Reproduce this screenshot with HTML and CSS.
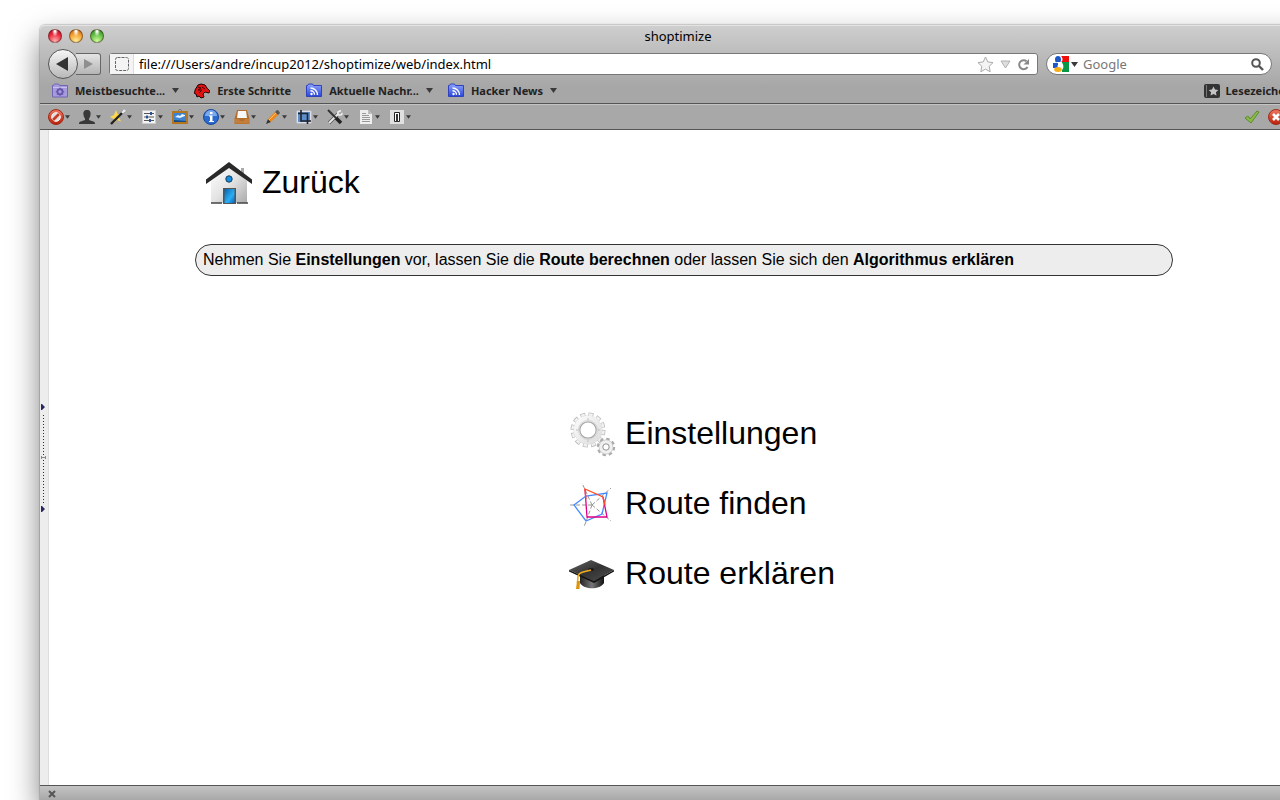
FILE: index.html
```html
<!DOCTYPE html>
<html lang="de">
<head>
<meta charset="utf-8">
<title>shoptimize</title>
<link rel="stylesheet" href="styles.css">
</head>
<body>
<svg class="defs" aria-hidden="true">
  <defs>
    <linearGradient id="gFeed" x1="0" y1="0" x2="0" y2="1"><stop offset="0" stop-color="#8fa4ff"/><stop offset="1" stop-color="#2945d8"/></linearGradient>
    <linearGradient id="gRed" x1="0" y1="0" x2="0" y2="1"><stop offset="0" stop-color="#ee7a62"/><stop offset="1" stop-color="#b81f08"/></linearGradient>
    <linearGradient id="gWall" x1="0" y1="0" x2="1" y2="1"><stop offset="0" stop-color="#fff"/><stop offset=".5" stop-color="#e4e4e4"/><stop offset="1" stop-color="#aaa"/></linearGradient>
    <linearGradient id="gDoor" x1="0" y1="0" x2="1" y2="1"><stop offset="0" stop-color="#0b5fa8"/><stop offset=".6" stop-color="#2ab0f5"/><stop offset="1" stop-color="#0a63b8"/></linearGradient>
    <linearGradient id="gGear" x1="0" y1="0" x2="1" y2="1"><stop offset="0" stop-color="#fafafa"/><stop offset="1" stop-color="#dedede"/></linearGradient>
    <linearGradient id="gCap" x1="0" y1="0" x2="1" y2="1"><stop offset="0" stop-color="#666"/><stop offset=".5" stop-color="#333"/><stop offset="1" stop-color="#505050"/></linearGradient>
    <linearGradient id="gBand" x1="0" y1="0" x2="1" y2="0"><stop offset="0" stop-color="#222"/><stop offset=".5" stop-color="#777"/><stop offset="1" stop-color="#111"/></linearGradient>
    <symbol id="caret" viewBox="0 0 7 5"><path d="M0 0h7L3.500 5z" fill="#3a3a3a"/></symbol>
    <symbol id="feed" viewBox="0 0 16 16">
      <path d="M.5 2.500h1l1-1.500h4l1 1.500h8v11H.5z" fill="url(#gFeed)" stroke="#2f42bb"/>
      <circle cx="5.500" cy="11" r="1.200" fill="#fff"/><path d="M4.500 7.800a4 4 0 0 1 4 4M4.500 5a7 7 0 0 1 7 7" fill="none" stroke="#fff" stroke-width="1.400"/>
    </symbol>
  </defs>
</svg>

<div class="window">
  <header class="chrome">
    <div class="titlebar">
      <div class="lights">
        <button class="light red" type="button" aria-label="Schließen"></button>
        <button class="light amber" type="button" aria-label="Minimieren"></button>
        <button class="light green" type="button" aria-label="Vergrößern"></button>
      </div>
      <span class="title">shoptimize</span>
    </div>

    <div class="navbar">
      <div class="history">
        <button class="back" type="button" aria-label="Zurück"><svg width="12" height="14" viewBox="0 0 12 14"><path d="M0 7 12 0v14z" fill="#333"/></svg></button>
        <button class="forward" type="button" aria-label="Vor"><svg width="9" height="10" viewBox="0 0 9 10"><path d="M9 5 0 0v10z" fill="#8f8f8f"/></svg></button>
      </div>
      <div class="urlbar">
        <span class="site"><svg width="16" height="16" viewBox="0 0 16 16"><rect x="1.500" y="1.500" width="13" height="13" rx="2" fill="none" stroke="#666" stroke-dasharray="3 1"/></svg></span>
        <input class="url" type="text" aria-label="Adresse" value="file:///Users/andre/incup2012/shoptimize/web/index.html">
        <button class="plain" type="button" aria-label="Lesezeichen setzen"><svg width="17" height="17" viewBox="0 0 17 17"><path d="m8.500 1 2.300 4.900 5.200.7-3.800 3.700 1 5.500-4.700-2.700-4.700 2.700 1-5.500L1 6.600l5.200-.7z" fill="#f4f4f4" stroke="#aaa"/></svg></button>
        <button class="plain" type="button" aria-label="Verlauf"><svg width="11" height="9" viewBox="0 0 11 9"><path d="M1 1h9L5.500 8z" fill="#ddd" stroke="#b0b0b0"/></svg></button>
        <button class="plain" type="button" aria-label="Neu laden"><svg width="13" height="13" viewBox="0 0 13 13"><path d="M9.500 3.200A4.500 4.500 0 1 0 10.500 9" fill="none" stroke="#888" stroke-width="2"/><path d="M12 1v5.500H6.500z" fill="#888"/></svg></button>
      </div>
      <div class="search">
        <button class="engine" type="button" aria-label="Suchmaschine">
          <svg width="16" height="16" viewBox="0 0 16 16"><path d="M8 0h8v6H8z" fill="#f20d0d"/><path d="M9 6h7v10H9z" fill="#089647"/><path d="M0 7h5v5H0z" fill="#1a57c8"/><ellipse cx="5" cy="3.500" rx="3" ry="3.500" fill="#1a57c8"/><path d="M8 0c2 2 2 5 0 6 3 2 3 6 1 8l-5-4 3-2-5-2 6 0z" fill="#fff"/><ellipse cx="5" cy="13.500" rx="3.800" ry="2.500" fill="#f6ae16"/></svg>
          <svg width="7" height="5"><use href="#caret"/></svg>
        </button>
        <input class="query" type="text" aria-label="Suche" placeholder="Google">
        <button class="plain" type="button" aria-label="Suchen"><svg width="13" height="13" viewBox="0 0 13 13"><circle cx="5" cy="5" r="3.800" fill="none" stroke="#555" stroke-width="2"/><path d="m8 8 4 4" stroke="#555" stroke-width="2.400"/></svg></button>
      </div>
    </div>

    <nav class="bookmarks" aria-label="Lesezeichen">
      <button class="mark" type="button">
        <svg width="16" height="16" viewBox="0 0 16 16"><path d="M.5 2.500h1l1-1.500h4l1 1.500h8v11.500H.5z" fill="#a69bdc" stroke="#7464b5"/><path d="M1 4.500h14" stroke="#c8c0ee"/><circle cx="8" cy="8.800" r="2.600" fill="none" stroke="#6655ab" stroke-width="1.800"/><path d="M8 4.500v8.600M3.700 8.800h8.600M5 5.800l6 6M11 5.800l-6 6" stroke="#6655ab" stroke-dasharray="1.800 5"/></svg>
        <span>Meistbesuchte...</span><svg class="drop" width="7" height="5"><use href="#caret"/></svg>
      </button>
      <a class="mark" href="#">
        <svg width="16" height="16" viewBox="0 0 16 16"><path d="M1 7 4 2l3-1 4 1 2 3 3 3-1 2-4-1-2 2 1 3-3 1-2-2-2 1-1-3-2-1 1-2z" fill="#e21212" stroke="#220000"/><path d="m4 4 3 1-3 2 4 0-3 3M8 4l3 2" fill="none" stroke="#400"/></svg>
        <span>Erste Schritte</span>
      </a>
      <button class="mark" type="button"><svg width="16" height="16"><use href="#feed"/></svg><span>Aktuelle Nachr...</span><svg class="drop" width="7" height="5"><use href="#caret"/></svg></button>
      <button class="mark" type="button"><svg width="16" height="16"><use href="#feed"/></svg><span>Hacker News</span><svg class="drop" width="7" height="5"><use href="#caret"/></svg></button>
      <button class="mark library" type="button">
        <svg width="16" height="16" viewBox="0 0 16 16"><rect y="1" width="16" height="14" rx="2" fill="#333"/><path d="M2.500 2v12" stroke="#777"/><path d="m9.500 3.500 1.500 3 3.300.4-2.400 2.300.6 3.300-3-1.600-3 1.600.6-3.300-2.400-2.300L8 6.500z" fill="#c4c4c4"/></svg>
        <span>Lesezeichen</span>
      </button>
    </nav>

    <div class="tools">
      <button class="tool" type="button" aria-label="Deaktivieren"><svg width="16" height="16" viewBox="0 0 16 16"><circle cx="8" cy="8" r="7.500" fill="url(#gRed)" stroke="#a12a16"/><circle cx="8" cy="8" r="4.300" fill="#ddd" stroke="#fff"/><path d="m5 11 6-6" stroke="#c83b24" stroke-width="2.600"/></svg><svg width="5" height="4"><use href="#caret"/></svg></button>
      <button class="tool" type="button" aria-label="Cookies"><svg width="16" height="16" viewBox="0 0 16 16"><path d="M8 1c3 0 4 2 3.500 5-.3 2-1 3-1.500 3.500V11l5 1.800c1 .5 1 1.500 1 2.200H0c0-.7 0-1.700 1-2.200L6 11V9.500C5.500 9 4.800 8 4.500 6 4 3 5 1 8 1z" fill="#393939"/></svg><svg width="5" height="4"><use href="#caret"/></svg></button>
      <button class="tool" type="button" aria-label="CSS"><svg width="16" height="16" viewBox="0 0 16 16"><path d="m6 1 1.500 4L12 5 9 8.500l2 4-4-1.500-3.500 3.500L4 10 0 8l4-2z" fill="#ffd94d"/><path d="M1 15 14 2" stroke="#222" stroke-width="2.400"/><path d="m12 4 3-3" stroke="#eee" stroke-width="2.400"/></svg><svg width="5" height="4"><use href="#caret"/></svg></button>
      <button class="tool" type="button" aria-label="Formulare"><svg width="16" height="16" viewBox="0 0 16 16"><rect x="1.500" y="1.500" width="13" height="13" fill="#f4f4f4" stroke="#ccc"/><path d="M3 4.500h10M3 8h10M3 11.500h10" stroke="#555"/><path d="M9 3h2v3H9zM5 6.500h2v3H5zM8 10h2v3H8z" fill="#29549c"/></svg><svg width="5" height="4"><use href="#caret"/></svg></button>
      <button class="tool" type="button" aria-label="Grafiken"><svg width="16" height="16" viewBox="0 0 16 16"><rect x="1" y="3" width="14" height="11" fill="#3c83d2" stroke="#b47620" stroke-width="2"/><path d="M3 8 6 6l2 1 2-2 3 1v1L8 9z" fill="#e8f3ff"/><path d="M2 13v-2l12 1v1z" fill="#174b82"/><path d="m6 2 2-2 2 2" fill="none" stroke="#777"/></svg><svg width="5" height="4"><use href="#caret"/></svg></button>
      <button class="tool" type="button" aria-label="Informationen"><svg width="16" height="16" viewBox="0 0 16 16"><circle cx="8" cy="8" r="7.500" fill="#2b6bd0" stroke="#1a469a"/><path d="M2 7a6 6 0 0 1 12 0z" fill="#7ba9ee"/><path d="M7 3h2.500v2H7zM6 6.500h3.500V12H11v1H6v-1h1V7.500H6z" fill="#fff"/></svg><svg width="5" height="4"><use href="#caret"/></svg></button>
      <button class="tool" type="button" aria-label="Verschiedenes"><svg width="16" height="16" viewBox="0 0 16 16"><path d="M3 1h10l2.500 9v5H.5v-5z" fill="#b56d2c"/><path d="M4 2h8l1 7H3z" fill="#f7f7f7"/><path d="M1 10h4l1 2h4l1-2h4v4.500H1z" fill="#c47e3c"/></svg><svg width="5" height="4"><use href="#caret"/></svg></button>
      <button class="tool" type="button" aria-label="Hervorheben"><svg width="16" height="16" viewBox="0 0 16 16"><path d="m1 15 2-5 3 3z" fill="#333"/><path d="m3 10 7-7 3 3-7 7z" fill="#ee8619"/><path d="m4 11 7-7" stroke="#ffc269"/><path d="m10 3 2-2q2 0 3 3l-2 2z" fill="#555"/></svg><svg width="5" height="4"><use href="#caret"/></svg></button>
      <button class="tool" type="button" aria-label="Größe ändern"><svg width="16" height="16" viewBox="0 0 16 16"><path d="M1 2h14v12H1z" fill="#e8eef7" stroke="#ccd"/><path d="M2 3h12v10H2z" fill="#5b8ecb"/><path d="M5 1v11h10M2 4.500h9.500V15" fill="none" stroke="#20242b" stroke-width="1.600"/></svg><svg width="5" height="4"><use href="#caret"/></svg></button>
      <button class="tool" type="button" aria-label="Werkzeuge"><svg width="16" height="16" viewBox="0 0 16 16"><path d="m2 14 9-9" stroke="#555" stroke-width="3.600"/><path d="m2 14 9-9" stroke="#e4e4e4" stroke-width="2"/><path d="M14 1.500 11 3v3h3l1.500-2" fill="none" stroke="#eee" stroke-width="1.600"/><path d="m1 1 8 8" stroke="#333" stroke-width="2"/><path d="m9 9 5 5" stroke="#222" stroke-width="3.600"/></svg><svg width="5" height="4"><use href="#caret"/></svg></button>
      <button class="tool" type="button" aria-label="Quelltext"><svg width="16" height="16" viewBox="0 0 16 16"><path d="M2 1h8l4 4v10H2z" fill="#eee"/><path d="M10 1v4h4z" fill="#bbb"/><path d="M4 4.500h4M4 6.500h7M4 8.500h8M4 10.500h8M4 12.500h8" stroke="#999"/></svg><svg width="5" height="4"><use href="#caret"/></svg></button>
      <button class="tool" type="button" aria-label="Optionen"><svg width="16" height="16" viewBox="0 0 16 16"><path d="M1 1h14v14H1z" fill="#e0e0e0"/><path d="M5.500 3.500h5v9h-5z" fill="#fff" stroke="#222"/><path d="M7 5h2v8H7z" fill="#333"/></svg><svg width="5" height="4"><use href="#caret"/></svg></button>
      <div class="status">
        <svg width="16" height="16" viewBox="0 0 16 16"><path d="m1 9 3-2 2 3 7-8 2 1-8 11z" fill="#8abb48" stroke="#5c8d28"/></svg>
        <svg width="16" height="16" viewBox="0 0 16 16"><circle cx="8" cy="8" r="7.500" fill="url(#gRed)" stroke="#a12a16"/><path d="m5 5 6 6M11 5l-6 6" stroke="#fff" stroke-width="2.600"/></svg>
      </div>
    </div>
  </header>

  <div class="view">
    <aside class="grip"><svg width="6" height="110" viewBox="0 0 6 110"><path d="M1 1h1l3 3-3 3H1zM1 103h1l3 3-3 3H1z" fill="#2a2860"/><path d="M3.500 12v90" stroke="#2a2860" stroke-dasharray="1 2"/><path d="M1.500 53v3M5.500 53v3M1 54.500h4" stroke="#888"/></svg></aside>
    <main class="page">
      <a class="entry home" href="#">
        <svg width="48" height="48" viewBox="0 -2 48 48"><path d="M36 8h3v8h-3z" fill="#aaa"/><path d="M6 21 24 6l18 15v22H6z" fill="url(#gWall)"/><path d="M18 28h13v16H18z" fill="#555"/><path d="M19.500 29h10v14h-10z" fill="url(#gDoor)"/><circle cx="24" cy="19" r="3.200" fill="#168be0" stroke="#12405f"/><path d="M6 43h11M32 43h11" stroke="#444" stroke-width="1.500"/><path d="M1 19.500 24 2l23 17.500v4.500L24 8 1 24z" fill="#292929"/></svg>
        <span>Zurück</span>
      </a>
      <p class="notice">Nehmen Sie <b>Einstellungen</b> vor, lassen Sie die <b>Route berechnen</b> oder lassen Sie sich den <b>Algorithmus erklären</b></p>
      <nav class="menu" aria-label="Hauptmenü">
        <a class="entry" href="#">
          <svg width="48" height="48" viewBox="0 0 48 48"><g fill="none"><circle cx="20" cy="21" r="15" stroke="#bcbcbc" stroke-width="5" stroke-dasharray="4.800 3.054"/><circle cx="20" cy="21" r="14.500" stroke="#f2f2f2" stroke-width="4.400" stroke-dasharray="3.400 4.192" stroke-dashoffset="-.6"/><circle cx="20" cy="21" r="14" stroke="#cfcfcf"/><circle cx="20" cy="21" r="11.200" stroke="url(#gGear)" stroke-width="6"/><circle cx="20" cy="21" r="8.200" stroke="#a8a8a8" stroke-width="1.200"/><circle cx="20" cy="21" r="9.500" stroke="#d4d4d4"/></g><g fill="#bbb"><circle cx="20" cy="10" r=".8"/><circle cx="20" cy="32" r=".8"/><circle cx="9" cy="21" r=".8"/><circle cx="31" cy="21" r=".8"/></g><g fill="none"><circle cx="38" cy="38" r="7.500" stroke="#aaa" stroke-width="3.400" stroke-dasharray="3.200 2.690"/><circle cx="38" cy="38" r="5.200" stroke="#c4c4c4" stroke-width="4.400"/><circle cx="38" cy="38" r="5" stroke="#f0f0f0" stroke-width="3.400"/><circle cx="38" cy="38" r="3.200" stroke="#999"/></g></svg>
          <span>Einstellungen</span>
        </a>
        <a class="entry" href="#">
          <svg width="48" height="48" viewBox="0 0 48 48"><g fill="none"><path d="M24 26H0M24 26 14 4M24 26 43 9M24 26 43 42M24 26 16 48" stroke="#999" stroke-dasharray="4 2"/><path d="m6 26 12-9 21-3-5 21-16 7z" stroke="#4689ff" stroke-width="1.300"/><path d="m17 10 2 28h20l-4-20" stroke="#e00088" stroke-width="1.300"/><path d="m18 20-1-10 18 8 2 8" stroke="#ff4d23" stroke-width="1.300"/></g></svg>
          <span>Route finden</span>
        </a>
        <a class="entry" href="#">
          <svg width="48" height="48" viewBox="0 0 48 48"><path d="M12 24v10c4 7 20 7 24 0V24z" fill="url(#gBand)"/><path d="m1 21 22-10 23 10-20 11z" fill="url(#gCap)"/><path d="m1 21 25 11 20-11v1.500L26 34 1 22.500z" fill="#151515"/><ellipse cx="23" cy="20.500" rx="3" ry="1.200" fill="#111"/><path d="m23 21-8 2q-4 1-5 4l-.5 7" fill="none" stroke="#f0ab18" stroke-width="1.600"/><path d="m9 32 3 0-.5 8-3.500 0z" fill="#dc940c"/></svg>
          <span>Route erklären</span>
        </a>
      </nav>
    </main>
  </div>

  <footer class="addons">
    <button class="plain" type="button" aria-label="Leiste schließen"><svg width="8" height="8" viewBox="0 0 8 8"><path d="m1 1 6 6M7 1 1 7" stroke="#555" stroke-width="2"/></svg></button>
  </footer>
</div>
</body>
</html>
```
FILE: styles.css
```css
* { box-sizing: border-box; }

body {
  margin: 0;
  height: 100vh;
  overflow: hidden;
  background: #fff;
  color: #000;
  font-family: "Noto Sans", "Open Sans", sans-serif;
  font-size: 13px;
}

svg { display: block; flex: none; }
.defs { position: absolute; width: 0; height: 0; }

button, input {
  margin: 0;
  padding: 0;
  border: 0;
  background: none;
  color: inherit;
  font: inherit;
}

a { color: inherit; text-decoration: none; }

.window {
  display: flex;
  flex-direction: column;
  height: calc(100vh - 25px);
  margin: 25px -36px 0 40px;
  border-radius: 5px 5px 0 0;
  box-shadow: 0 14px 30px rgba(0, 0, 0, .5), 0 0 1px 1px rgba(0, 0, 0, .16);
}

.chrome {
  border-radius: 5px 5px 0 0;
  border-top: 1px solid #e4e4e4;
  background: linear-gradient(#cecece, #a7a7a7 60px);
}

.titlebar {
  display: grid;
  grid-template-columns: 1fr auto 1fr;
  align-items: center;
  height: 22px;
  padding: 0 8px 2px;
}

.lights { display: flex; gap: 7px; }
.light {
  width: 14px;
  height: 14px;
  border-radius: 50%;
  border: 1px solid rgba(60, 30, 20, .5);
}
.red { background: radial-gradient(ellipse at 50% 10%, #fff 5%, transparent 35%), radial-gradient(circle at 50% 90%, #ffb0b0, #e8253a 60%, #a41020); }
.amber { background: radial-gradient(ellipse at 50% 10%, #fff 5%, transparent 35%), radial-gradient(circle at 50% 90%, #fff09a, #f29b2c 60%, #b35e10); }
.green { background: radial-gradient(ellipse at 50% 10%, #fff 5%, transparent 35%), radial-gradient(circle at 50% 90%, #d0ff9c, #58b83e 60%, #2a7a20); }

.title { line-height: 20px; }

.navbar {
  display: flex;
  align-items: center;
  gap: 8px;
  height: 32px;
  padding: 0 44px 0 8px;
}

.history { display: flex; align-items: center; }
.back {
  position: relative;
  display: grid;
  place-items: center;
  width: 30px;
  height: 30px;
  padding-right: 2px;
  border: 1px solid #555;
  border-radius: 50%;
  background: linear-gradient(#f6f6f6, #b8b8b8);
}
.forward {
  display: grid;
  place-items: center;
  width: 25px;
  height: 22px;
  margin-left: -2px;
  border: 1px solid #666;
  border-left: 0;
  border-radius: 0 3px 3px 0;
  background: linear-gradient(#e4e4e4, #b5b5b5);
}

.urlbar, .search {
  display: flex;
  align-items: center;
  height: 22px;
  border: 1px solid #777;
  background: #fff;
}
.urlbar {
  flex: 1;
  gap: 6px;
  padding-right: 7px;
  border-radius: 3px;
}
.site {
  display: grid;
  place-items: center;
  width: 24px;
  height: 20px;
  border-right: 1px solid #ddd;
  background: #f4f4f4;
}
.url { flex: 1; min-width: 0; margin-left: -1px; }

.search {
  width: 226px;
  padding: 0 7px 0 6px;
  border-radius: 11px;
}
.engine { display: flex; align-items: center; gap: 2px; }
.query { flex: 1; min-width: 0; margin-left: 5px; }
.query::placeholder { color: #777; opacity: 1; }

.bookmarks {
  display: flex;
  align-items: center;
  gap: 15px;
  height: 24px;
  padding: 0 24px 2px 12px;
  border-bottom: 1px solid #555;
}
.mark {
  display: flex;
  align-items: center;
  gap: 7px;
  color: #222;
  font-size: 11px;
  font-weight: 700;
  line-height: 16px;
  white-space: nowrap;
}
.library { gap: 5px; margin-left: auto; }

.tools {
  display: flex;
  align-items: center;
  gap: 9px;
  height: 26px;
  padding: 0 32px 0 8px;
  border-top: 1px solid #c4c4c4;
  border-bottom: 1px solid #555;
  background: #a8a8a8;
}
.tool { display: flex; align-items: center; gap: 1px; }
.status { display: flex; gap: 8px; margin-left: auto; }

.view { display: flex; flex: 1; min-height: 0; background: #fff; }
.grip {
  display: flex;
  align-items: center;
  width: 9px;
  border-right: 1px solid #ddd;
  background: #ededed;
}

.page {
  flex: 1;
  padding: 28px 143px 0 146px;
  font-family: "Liberation Sans", Arial, sans-serif;
}
.entry {
  display: flex;
  align-items: center;
  gap: 9px;
  height: 48px;
  font-size: 32px;
  line-height: 40px;
}
.home { width: max-content; margin-left: 10px; }
.notice {
  margin: 38px 0 0;
  padding: 5px 7px;
  border: 1px solid #333;
  border-radius: 16px;
  background: #ededed;
  font-size: 16px;
  line-height: 20px;
}
.menu {
  display: grid;
  gap: 22px;
  width: max-content;
  margin: 133px auto 0;
  padding-left: 35px;
}

.addons {
  display: flex;
  align-items: center;
  height: 15px;
  padding: 2px 8px 0;
  border-top: 1px solid #555;
  background: linear-gradient(#c4c4c4, #a8a8a8);
}
```
